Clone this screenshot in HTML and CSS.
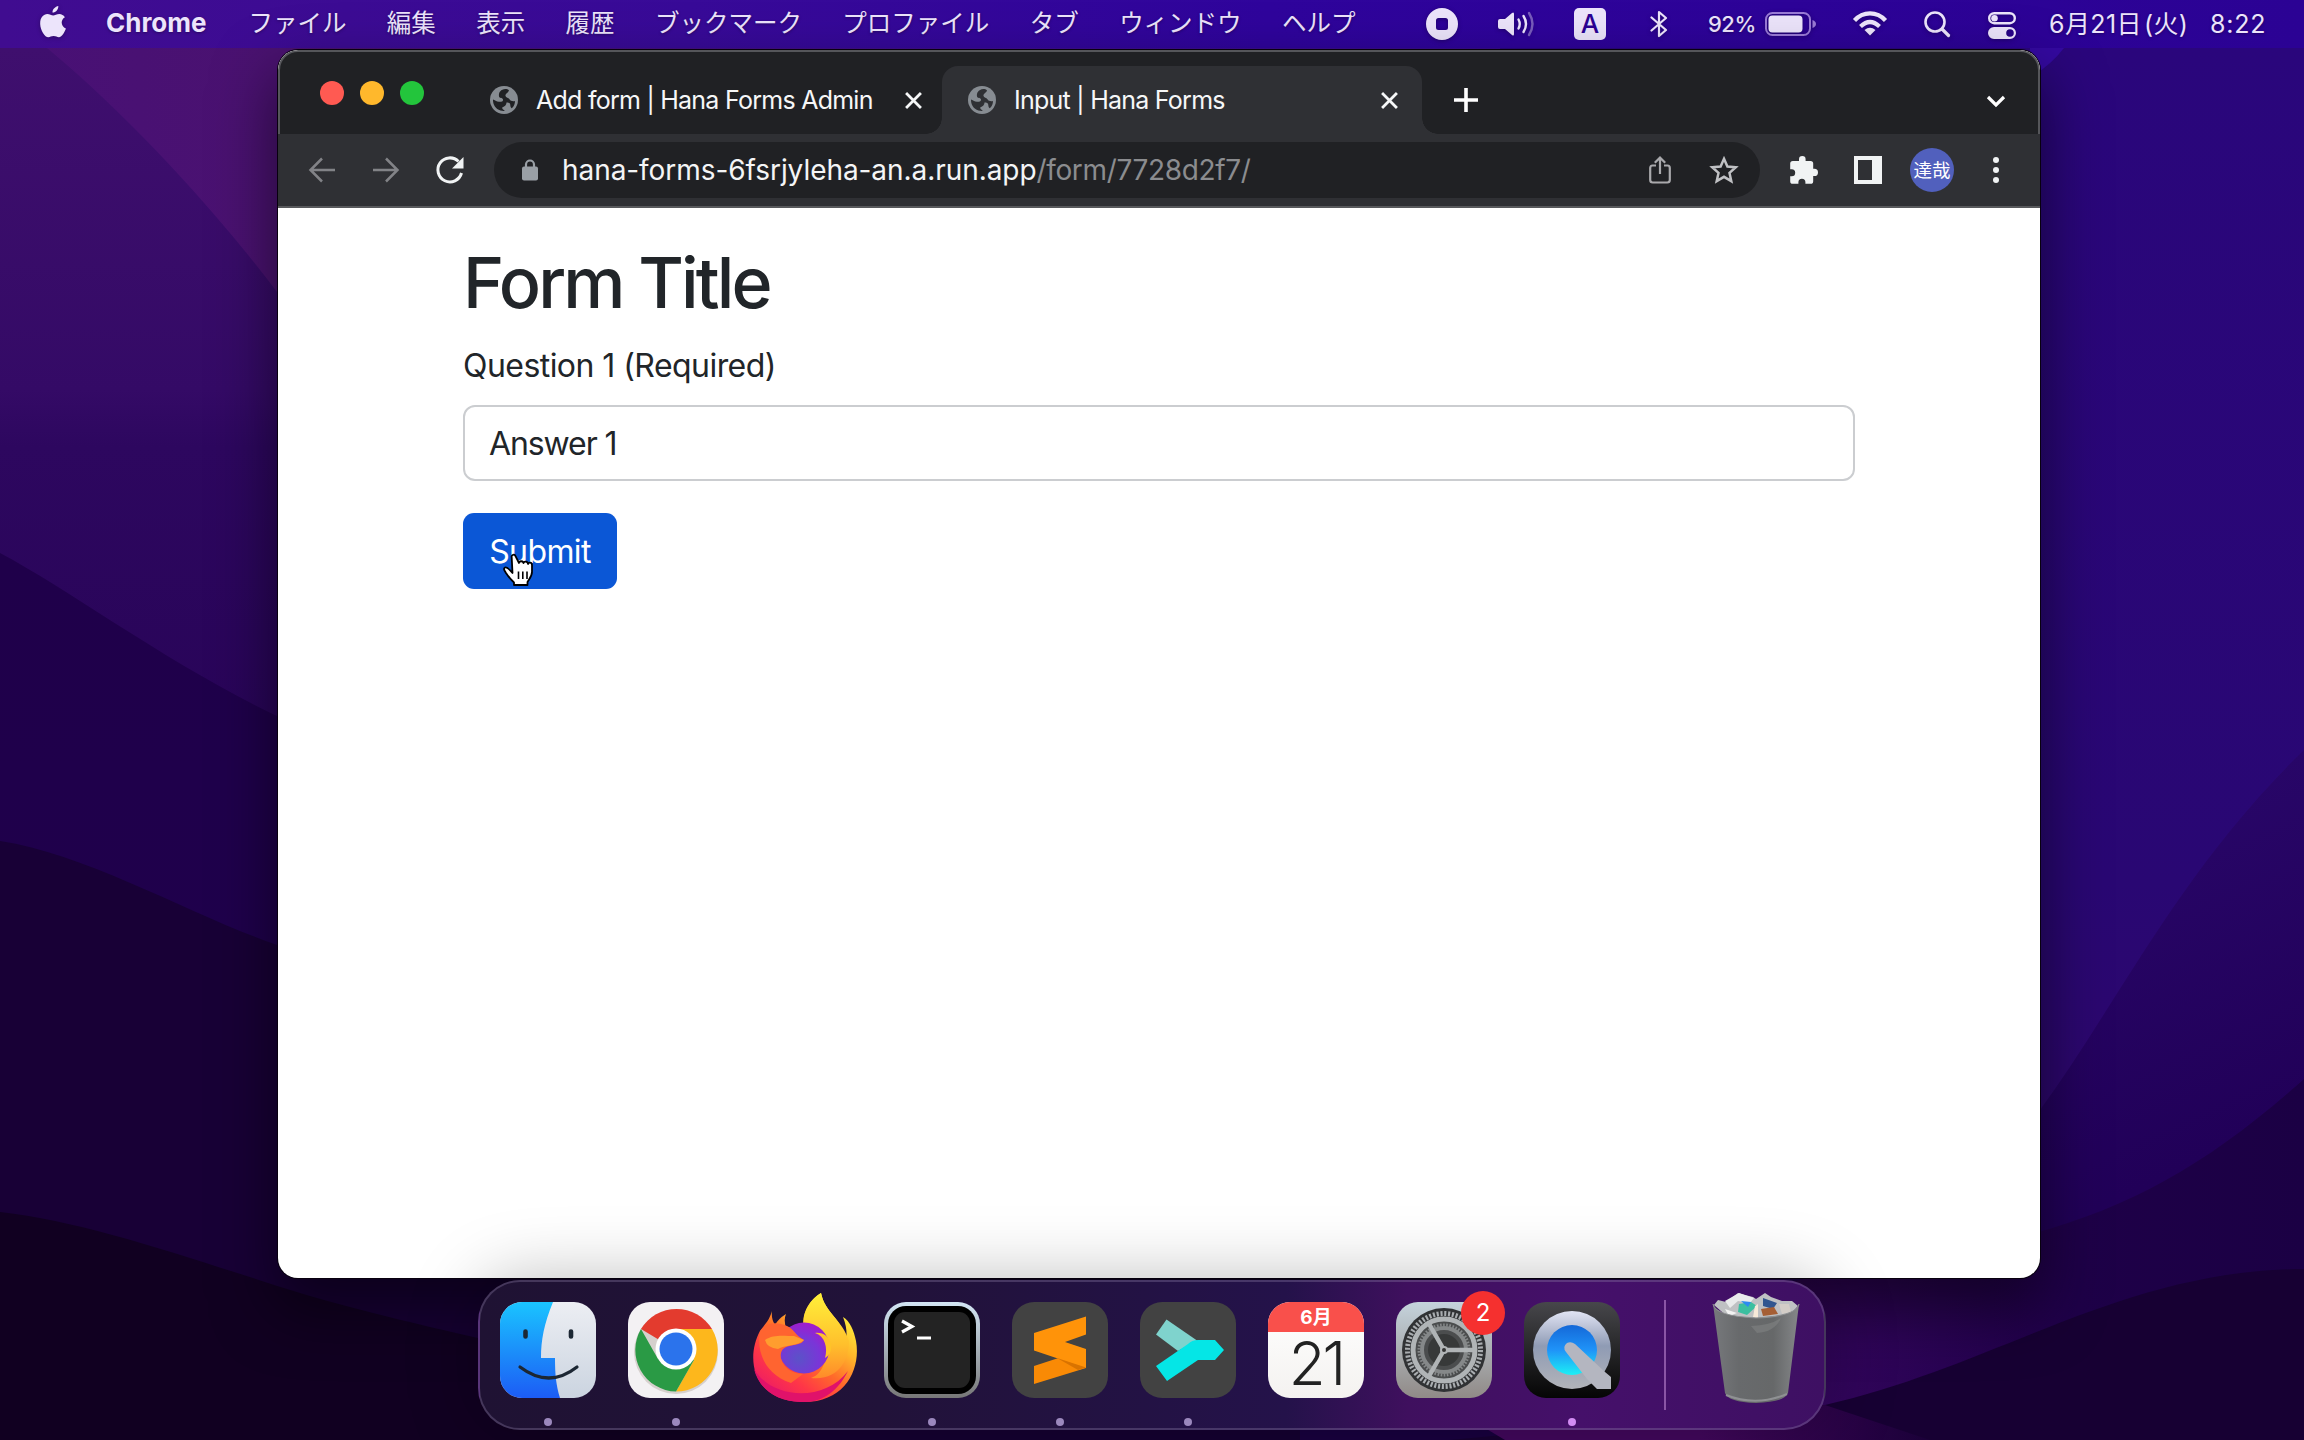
FILE: index.html
```html
<!DOCTYPE html>
<html lang="ja">
<head>
<meta charset="utf-8">
<title>Input | Hana Forms</title>
<link rel="stylesheet" href="styles.css">
</head>
<body>
<svg class="wallpaper" viewBox="0 0 2304 1440" preserveAspectRatio="none" aria-hidden="true">
  <defs>
    <linearGradient id="w0" x1="0" x2="1" y1="0" y2="0"><stop offset="0" stop-color="#481076"/><stop offset=".12" stop-color="#4a1270"/><stop offset=".45" stop-color="#3c0c90"/><stop offset="1" stop-color="#2b0780"/></linearGradient>
    <linearGradient id="w1" x1="0" x2="0" y1="0" y2="1"><stop offset="0" stop-color="#3f0f6e"/><stop offset=".48" stop-color="#340a66"/><stop offset=".56" stop-color="#2d075f"/><stop offset="1" stop-color="#280458"/></linearGradient>
    <linearGradient id="w2" x1="0" x2="0" y1="0" y2="1"><stop offset="0" stop-color="#1f004a"/><stop offset="1" stop-color="#1f004e"/></linearGradient>
    <linearGradient id="w3" x1="0" x2="0" y1="0" y2="1"><stop offset="0" stop-color="#2a067c"/><stop offset=".6" stop-color="#290773"/><stop offset="1" stop-color="#320764"/></linearGradient>
    <linearGradient id="w4" x1="0" x2="1" y1="0" y2="0"><stop offset="0" stop-color="#480a68"/><stop offset=".45" stop-color="#34065e"/><stop offset=".75" stop-color="#1e0048"/><stop offset="1" stop-color="#1b0044"/></linearGradient>
    <linearGradient id="w5" gradientUnits="userSpaceOnUse" x1="1700" x2="1930" y1="0" y2="0"><stop offset="0" stop-color="#43075e"/><stop offset="1" stop-color="#1a0038"/></linearGradient>
    <linearGradient id="w6" gradientUnits="userSpaceOnUse" x1="2060" y1="860" x2="2200" y2="1160"><stop offset="0" stop-color="#280668"/><stop offset="1" stop-color="#210058"/></linearGradient>
  </defs>
  <rect width="2304" height="1440" fill="url(#w0)"/>
  <path d="M0 48H47C110 100 200 190 277 292L460 450V760H0Z" fill="url(#w1)"/>
  <path d="M0 553C70 590 170 665 277 716L500 800V1440H0Z" fill="url(#w2)"/>
  <path d="M0 841C90 855 190 915 277 945L900 1100V1440H0Z" fill="#180036"/>
  <path d="M0 1212C90 1222 200 1262 300 1293S700 1390 1000 1440H0Z" fill="#110021"/>
  <path d="M1500 48H2304V1440H1500Z" fill="url(#w3)"/>
  <path d="M2030 78Q2052 64 2064 48H2030Z" fill="#3409a0"/>
  <path d="M1500 1300L2040 1110C2120 1000 2180 870 2304 750V1440H1500Z" fill="url(#w6)"/>
  <path d="M1400 1360L1900 1260C2080 1235 2180 1190 2304 1079V1440H1400Z" fill="url(#w4)"/>
  <path d="M800 1278H1500V1440H800Z" fill="#150032"/>
  <path d="M1300 1440V1360L1485 1428L1512 1440Z" fill="#190040"/>
  <path d="M1450 1440L1825 1405C2000 1365 2120 1270 2304 1269V1440Z" fill="#170033"/>
  <path d="M1485 1428L1825 1405L1930 1440H1505Z" fill="url(#w5)"/>
</svg>

<header class="menubar">
  <svg class="apple" viewBox="0 0 26 32"><path d="M18.3 0c.3 2.900-2.600 6.800-5.800 6.600C12.200 3.700 15.200.4 18.300 0ZM24.900 11.200c-4.800 2.900-4 9.400 1 11.400-.9 3-3.900 8.700-7 8.700-2 0-2.800-1.200-5.300-1.200s-3.400 1.200-5.200 1.200C4.800 31.300.4 24.100.2 18.200-.1 11.600 3.500 8.200 7.300 8.100c2.300 0 4.200 1.500 5.900 1.500 1.600 0 3.600-1.600 6.200-1.600 2.200.1 4.200 1.200 5.500 3.200Z"/></svg>
  <nav class="menus">
    <b class="app-name">Chrome</b><span>ファイル</span><span>編集</span><span>表示</span><span>履歴</span><span>ブックマーク</span><span>プロファイル</span><span>タブ</span><span>ウィンドウ</span><span>ヘルプ</span>
  </nav>
  <div class="status">
    <svg class="st-rec" width="32" height="32" viewBox="0 0 32 32"><path fill-rule="evenodd" d="M16 0a16 16 0 1 1 0 32a16 16 0 1 1 0-32ZM12.500 10a2.500 2.500 0 0 0-2.500 2.500v7a2.500 2.500 0 0 0 2.500 2.500h7a2.500 2.500 0 0 0 2.500-2.500v-7a2.500 2.500 0 0 0-2.500-2.500Z"/></svg>
    <svg class="st-vol" width="38" height="28" viewBox="0 0 38 28"><path d="M0 11q0-2 2-2h5l7-6q2-1.500 2 1v20q0 2.500-2 1l-7-6H2q-2 0-2-2Z"/><g fill="none" stroke="#ece4fb" stroke-width="2.400" stroke-linecap="round"><path d="M20.500 9.500q2.500 4.500 0 9"/><path d="M25.500 6q5 8 0 16"/><path d="M31 3q7 11 0 22" opacity=".4"/></g></svg>
    <span class="ime">A</span>
    <svg class="st-bt" width="18" height="28" viewBox="0 0 18 28"><path d="M1.500 7.500 16 20 9 26V2L16 8 1.500 20.500" fill="none" stroke="#ece4fb" stroke-width="2.200" stroke-linejoin="round" stroke-linecap="round"/></svg>
    <span class="pct">92%</span>
    <svg class="st-bat" width="52" height="24" viewBox="0 0 52 24"><rect x="1" y="1" width="44" height="22" rx="6.500" fill="none" stroke="#9a7ad6" stroke-width="2"/><rect x="3.500" y="3.500" width="34" height="17" rx="4"/><path d="M47.500 8q3.500 1.500 3.500 4t-3.500 4Z" fill="#9a7ad6"/></svg>
    <svg class="st-wifi" width="34" height="25" viewBox="0 0 34 25"><g fill="none" stroke="#ece4fb" stroke-width="4.200"><path d="M1.500 9.500C10 0 24 0 32.500 9.500"/><path d="M7.500 15.500q9.500-9 19 0"/></g><path d="M11.500 19q5.500-4.500 11 0L17 24.500Z"/></svg>
    <svg class="st-find" width="26" height="26" viewBox="0 0 26 26"><g fill="none" stroke="#ece4fb" stroke-width="2.600" stroke-linecap="round"><circle cx="11" cy="11" r="9.500"/><path d="m18 18 6.500 6.500" stroke-width="3.200"/></g></svg>
    <svg class="st-cc" width="28" height="27" viewBox="0 0 28 27"><rect x="1.200" y="1.200" width="25.600" height="10" rx="5" fill="none" stroke="#ece4fb" stroke-width="2.400"/><circle cx="6.500" cy="6.200" r="3.300"/><path fill-rule="evenodd" d="M6 15h16a6 6 0 0 1 0 12H6a6 6 0 0 1 0-12Zm16 2.200a3.800 3.800 0 1 0 0 7.600a3.800 3.800 0 1 0 0-7.600Z"/></svg>
    <span class="date">6月21日<span class="dow">(火)</span></span><span class="time">8:22</span>
  </div>
</header>

<main class="window">
  <div class="tabstrip">
    <div class="lights"><i class="red"></i><i class="amber"></i><i class="green"></i></div>
    <div class="tab">
      <svg class="globe" viewBox="0 0 28 28"><circle cx="14" cy="14" r="14" fill="#878c92"/><path d="M15.500 3C10 3.500 8.500 7 9 10.500c.3 1.700 3.500 1 4 3 .4 2-2 2.500-4 2.300C6.500 15.500 4.500 14 3 13.500c-.2 5 2.500 9.500 7.500 11 2 .5 3.500.5 4.500.3-1.500-1-3-1.800-2.800-3.300 2.800-1 4.300-3 4.300-5 2 0 3.800.5 3.800 2.500 0 1.500.5 2.800 1.500 3.300 2.200-1.800 3.200-4.500 3.200-7.300-2 .5-4.500.2-5.500-1.700-1-1.700-3.500-1.300-4-3.300C15 7.500 18.500 7 19 4.300 18 3.400 16.800 3 15.500 3Z" fill="#202124"/></svg>
      <span class="tab-title t1">Add form | Hana Forms Admin</span>
      <svg class="close" viewBox="0 0 16 16"><path d="M1 1 15 15M15 1 1 15"/></svg>
    </div>
    <div class="tab active">
      <svg class="globe" viewBox="0 0 28 28"><circle cx="14" cy="14" r="14" fill="#878c92"/><path d="M15.500 3C10 3.500 8.500 7 9 10.500c.3 1.700 3.500 1 4 3 .4 2-2 2.500-4 2.300C6.500 15.500 4.500 14 3 13.500c-.2 5 2.500 9.500 7.500 11 2 .5 3.500.5 4.500.3-1.500-1-3-1.800-2.800-3.300 2.800-1 4.300-3 4.300-5 2 0 3.800.5 3.800 2.500 0 1.500.5 2.800 1.500 3.300 2.200-1.800 3.200-4.500 3.200-7.300-2 .5-4.500.2-5.500-1.700-1-1.700-3.500-1.300-4-3.300C15 7.500 18.500 7 19 4.300 18 3.400 16.800 3 15.500 3Z" fill="#2f3034"/></svg>
      <span class="tab-title t2">Input | Hana Forms</span>
      <svg class="close" viewBox="0 0 16 16"><path d="M1 1 15 15M15 1 1 15"/></svg>
    </div>
    <svg class="plus" viewBox="0 0 24 24"><path d="M12 0v24M0 12h24"/></svg>
    <svg class="chev" viewBox="0 0 20 12"><path d="m2 2 8 8 8-8"/></svg>
  </div>

  <div class="toolbar">
    <svg class="arrow" viewBox="0 0 26 26"><path d="M26 13H2M13 1.500 1.500 13 13 24.500"/></svg>
    <svg class="arrow" viewBox="0 0 26 26"><path d="M0 13h24M13 1.500 24.500 13 13 24.500"/></svg>
    <svg class="reload" viewBox="0 0 28 28"><path d="M22.500 5.500A12 12 0 1 0 25.500 17" fill="none" stroke="#f1f3f4" stroke-width="3"/><path d="M27.500 1v11.500H16Z" fill="#f1f3f4"/></svg>
    <div class="omnibox">
      <svg class="lock" viewBox="0 0 16 22"><path d="M4 9V5.500a4 4 0 0 1 8 0V9" fill="none" stroke="#9aa0a6" stroke-width="2.200"/><rect y="7.500" width="16" height="14" rx="2" fill="#9aa0a6"/></svg>
      <span class="url">hana-forms-6fsrjyleha-an.a.run.app<span class="path">/form/7728d2f7/</span></span>
      <svg class="share" viewBox="0 0 22 28"><g fill="none" stroke="#a9a9ac" stroke-width="2.200"><path d="M7 9.500H3.500Q1.200 9.500 1.200 12v12q0 2.500 2.500 2.500h14.600q2.500 0 2.500-2.500V12q0-2.500-2.300-2.500H15"/><path d="M11 18V2M5.800 6.800 11 1.600l5.200 5.200"/></g></svg>
      <svg class="star" viewBox="0 0 28 28"><path d="m14 2.800 3.400 7.700 8.400.8-6.300 5.600 1.800 8.200-7.300-4.300-7.300 4.300 1.800-8.200-6.300-5.600 8.400-.8Z" fill="none" stroke="#c0c1c4" stroke-width="2.500"/></svg>
    </div>
    <svg class="ext" viewBox="0 0 28 28"><path d="M9 3.300a3.300 3.300 0 0 1 6.600 0V5h5q2.600 0 2.600 2.600v5.200h1.200a3.600 3.600 0 0 1 0 7.200h-1.200v5.200q0 2.600-2.600 2.600h-5.200v-1.500a3.500 3.500 0 0 0-7 0v1.500H2.800Q.2 27.800.2 25.200v-5h1.500a3.500 3.500 0 0 0 0-7H.2V7.600Q.2 5 2.800 5H9Z"/></svg>
    <svg class="panel" viewBox="0 0 28 28"><path fill-rule="evenodd" d="M0 0h28v28H0ZM4 4v20h14V4Z"/></svg>
    <span class="avatar">達哉</span>
    <svg class="kebab" viewBox="0 0 6 26"><circle cx="3" cy="3" r="3"/><circle cx="3" cy="13" r="3"/><circle cx="3" cy="23" r="3"/></svg>
  </div>

  <section class="page">
    <h1>Form Title</h1>
    <label for="q1">Question 1 (Required)</label>
    <input id="q1" type="text" value="Answer 1">
    <button type="button"><span>Submit</span>
      <svg class="cursor" viewBox="0 0 32 34"><path d="M9.500 20C7 17 4 14 2 14.500c-2 1-.5 3 1 5.500 3 4.500 4 6 8 9.500v2.500h13.500v-3c2.500-4 4.500-6 4.500-10V12c0-3-3.500-3-4-1-.2-3-4.200-3.200-4.500-.8-.5-2.700-4.300-2.500-4.500-.2L12.500 3.200C11.700.7 8 1.500 8.700 4.500Z" fill="#fff" stroke="#000" stroke-width="1.800" stroke-linejoin="round"/><path d="M15.500 18.500V26M19.800 18.500V26M24 18.500V26" stroke="#000" stroke-width="1.600"/></svg>
    </button>
  </section>
</main>

<footer class="dock">
  <div class="slot run"><svg viewBox="0 0 96 96">
    <defs><linearGradient id="fa" x2="0" y2="1"><stop stop-color="#1ac4ff"/><stop offset="1" stop-color="#1c5cf5"/></linearGradient><linearGradient id="fb" x2="0" y2="1"><stop stop-color="#eceef3"/><stop offset="1" stop-color="#cbd4e0"/></linearGradient><clipPath id="sq"><rect width="96" height="96" rx="22"/></clipPath></defs>
    <g clip-path="url(#sq)"><path d="M0 0h96v96H0Z" fill="url(#fb)"/><path d="M0 0h53C44 22 41 38 41 56h14c0 16 1 27 5 40H0Z" fill="url(#fa)"/></g>
    <g stroke="#1c2733" stroke-linecap="round" fill="none"><path d="M25.500 29.500v5M71 29.500v5" stroke-width="4.600"/><path d="M20 65q29 22 57 0" stroke-width="3.200"/></g></svg></div>
  <div class="slot run"><svg viewBox="0 0 96 96">
    <rect width="96" height="96" rx="22" fill="#f3f1f3"/><circle cx="48" cy="50" r="42" fill="#b9b0a8" opacity=".5"/>
    <path d="M48 48 13 27A41.500 41.500 0 0 1 84 27Z" fill="#e33b2e"/><path d="M48 48V27H84A41.500 41.500 0 0 1 48 89.500L66 58Z" fill="#fdb71c"/><path d="M48 48 66 58 48 89.500A41.500 41.500 0 0 1 13 27L30 57Z" fill="#2a9a45"/>
    <circle cx="48" cy="47" r="20.500" fill="#fff"/><circle cx="48" cy="47" r="16.500" fill="#2b73ec"/></svg></div>
  <div class="slot"><svg class="fox" viewBox="0 0 106 110">
    <defs><linearGradient id="ff1" x1=".8" y1=".1" x2=".2" y2=".9"><stop stop-color="#fff33c"/><stop offset=".3" stop-color="#ffb52a"/><stop offset=".55" stop-color="#ff6a2a"/><stop offset=".8" stop-color="#ff3647"/><stop offset="1" stop-color="#f02060"/></linearGradient><radialGradient id="ff2" cx=".4" cy=".7" r=".7"><stop stop-color="#5b52c8"/><stop offset=".6" stop-color="#7a35d8"/><stop offset="1" stop-color="#a01ccc"/></radialGradient><linearGradient id="ff3" x2="0" y2="1"><stop stop-color="#fff03a"/><stop offset=".6" stop-color="#ffc02c"/><stop offset="1" stop-color="#ff8a2a"/></linearGradient></defs>
    <path d="M21 18C18 28 14 31 9 38-6 66 2 109 53 109 95 109 110 75 105 48 103 38 99 28 92 24 96 34 96 42 95 46 91 26 74 20 70 0 57 8 51 22 53 33L36 38Q32 28 35 21 27 26 24 32 20 26 21 18Z" fill="url(#ff1)"/>
    <path d="M70 0C57 8 50 22 53 36 66 40 77 52 74 68 71 78 66 83 60 85 88 88 98 66 98 48 91 26 74 20 70 0Z" fill="url(#ff3)"/>
    <circle cx="53" cy="55" r="25.500" fill="url(#ff2)"/>
    <path d="M9 38C16 30 24 28 36 33 43 36 44 42 53 47 49 55 33 49 30 60 28 70 38 81 52 81L40 90C15 82 5 60 9 38Z" fill="#ff6430"/>
    <path d="M14 47C22 41 34 43 43 43L53 47C47 53 33 52 27 56Q16 55 14 47Z" fill="#ff9d2e"/>
    <path d="M64 40C74 43 77 55 74 65 86 59 80 38 64 40Z" fill="#ffc229"/>
    <path d="M3 76C20 106 73 110 97 78 84 104 65 110 49 109 25 108 8 96 3 76Z" fill="#e0126a"/></svg></div>
  <div class="slot run"><svg viewBox="0 0 96 96"><defs><linearGradient id="ta" x2="0" y2="1"><stop stop-color="#d3e6f5"/><stop offset="1" stop-color="#777"/></linearGradient></defs><rect width="96" height="96" rx="22" fill="url(#ta)"/><rect x="4" y="4" width="88" height="88" rx="18" fill="#000"/><rect x="10" y="10" width="76" height="76" rx="11" fill="#232323"/><path d="m18 19 10 5.500L18 30M33 36h14" fill="none" stroke="#fff" stroke-width="3.200"/></svg></div>
  <div class="slot run"><svg viewBox="0 0 96 96"><rect width="96" height="96" rx="22" fill="#424242"/><path d="m22 64 52-17v19L22 82Z" fill="#f98a05"/><path d="M22 31 74 14.500v18L53 40l21 7v19L22 48.500Z" fill="#ff9309"/><path d="m45 56 29 9.500-8 2.500Z" fill="#d97300"/></svg></div>
  <div class="slot run"><svg viewBox="0 0 96 96"><rect width="96" height="96" rx="22" fill="#424242"/><path d="M26.500 17.500 57 38.500 38 49 16 32.500Z" fill="#7fd3cd"/><path d="M16 64 48 42q4-4 10-4h17l9 10-9 10H58L27 79Z" fill="#05e6e6"/></svg></div>
  <div class="slot"><div class="cal"><span class="month">6月</span><span class="day">21</span></div></div>
  <div class="slot"><svg viewBox="0 0 96 96">
    <defs><linearGradient id="ga" x2="0" y2="1"><stop stop-color="#c5d3dc"/><stop offset="1" stop-color="#908a87"/></linearGradient></defs>
    <rect width="96" height="96" rx="22" fill="url(#ga)"/><circle cx="48" cy="48" r="42" fill="#303234"/><circle cx="48" cy="48" r="36.500" fill="none" stroke="#a9adb0" stroke-width="5" stroke-dasharray="2.100 1.722"/><circle cx="48" cy="48" r="31" fill="#4b4d4e" stroke="#b0b4b6" stroke-width="5"/>
    <circle cx="48" cy="48" r="22" fill="none" stroke="#858889" stroke-width="4"/><circle cx="48" cy="48" r="25" fill="none" stroke="#858889" stroke-width="3" stroke-dasharray="1.600 1.540"/><circle cx="48" cy="48" r="16" fill="#373939"/><path d="M48 48h31M48 48 32.500 21M48 48 32.500 75" stroke="#b0b4b6" stroke-width="4.500"/><circle cx="48" cy="48" r="4" fill="#b0b4b6"/><circle cx="48" cy="48" r="2" fill="#333"/></svg><span class="badge">2</span></div>
  <div class="slot run bright"><svg viewBox="0 0 96 96">
    <defs><linearGradient id="qa" x2="0" y2="1"><stop stop-color="#47474b"/><stop offset="1" stop-color="#050505"/></linearGradient><linearGradient id="qb" x2="0" y2="1"><stop stop-color="#e1e4f4"/><stop offset=".45" stop-color="#8f9bb4"/><stop offset="1" stop-color="#b2b4b9"/></linearGradient><linearGradient id="qc" x2="0" y2="1"><stop stop-color="#1468d8"/><stop offset=".5" stop-color="#1f93f8"/><stop offset="1" stop-color="#1cf0f5"/></linearGradient></defs>
    <rect width="96" height="96" rx="22" fill="url(#qa)"/><circle cx="48" cy="48" r="39" fill="url(#qb)"/><circle cx="48" cy="48" r="25" fill="url(#qc)"/><path d="M42 50q-4-5 1-9 4-2 8 1L81 70l6 5v12H73L63 77Z" fill="#b4b6c0"/></svg></div>
  <i class="divider"></i>
  <div class="slot trash"><svg viewBox="0 0 86 112">
    <defs><linearGradient id="tr" x2="1" y2="0"><stop stop-color="#77797c"/><stop offset=".3" stop-color="#686a6c"/><stop offset=".7" stop-color="#666869"/><stop offset="1" stop-color="#858789"/></linearGradient></defs>
    <path d="M1 13 5 8 13 10 25 1 32 3 40 5 43 7 52 1 58 5 69 9 79 9 85 14 74 26 16 26Z" fill="#bfc1c3"/>
    <path d="m12 9 14-8 15 5-4 5-12-2-8 7Z" fill="#e9ebeb"/><path d="m26 12 12-2 6 4-10 9-9-3Z" fill="#3cbfa0"/><path d="m28 9 10 1-3 5Z" fill="#2d8bef"/><path d="m50 6 14 5-4 6-10-3Z" fill="#31568f"/><path d="m48 17 13-2 4 7-15 2Z" fill="#a55f35"/><path d="m66 12 10 0 2 8-9 2Z" fill="#d3cdc7"/><path d="m12 17 12 4-8 3Z" fill="#f2f2f2"/><path d="m42 14 3-2v14l-5-1Z" fill="#f7e9d8"/>
    <path d="M0 12Q2 24 43 26 84 24 86 12L75 101Q72 110 43 111 15 110 12 101Z" fill="url(#tr)"/><path d="M0 12Q2 24 43 26 84 24 86 12" fill="none" stroke="#8c8e90" stroke-width="1.200"/><path d="M13 103Q43 115 74 102" fill="none" stroke="#8f9193" stroke-width="2"/><path d="M38 34q20-1 30-8-6 14-24 15Z" fill="#858788" opacity=".5"/></svg></div>
</footer>
</body>
</html>
```
FILE: styles.css
```css
* { box-sizing: border-box; }
html, body { margin: 0; width: 2304px; height: 1440px; overflow: hidden; }
body { position: relative; background: #1b0044; font-family: Inter, "Noto Sans CJK JP", sans-serif; }
svg { display: block; flex: none; overflow: visible; }
.wallpaper { position: absolute; inset: 0; width: 2304px; height: 1440px; z-index: -1; }

/* Menu bar */
.menubar { display: flex; align-items: center; height: 48px; padding: 0 38px 0 40px; color: #ece4fb;
  background: linear-gradient(90deg, #400c90 0, #380a98 30%, #2f049c 55%, #2b0294 100%);
  font-size: 24.5px; line-height: 48px; white-space: nowrap; text-shadow: 0 1px 3px rgba(0,0,0,.35); }
.menubar svg { fill: #ece4fb; filter: drop-shadow(0 1px 2px rgba(0,0,0,.3)); }
.apple { width: 26px; height: 32px; margin-top: -4px; }
.menus { display: flex; gap: 40.4px; margin-left: 40px; font-family: "Noto Sans CJK JP", sans-serif; font-weight: 400; }
.menus span { position: relative; top: -2px; }
.app-name { width: 102px; font: 700 26px/46px Inter, sans-serif; letter-spacing: 0; }
.status { display: flex; align-items: center; margin-left: auto; }
.st-vol { margin-left: 40px; }
.ime { width: 32px; height: 32px; margin-left: 38px; border-radius: 5px; background: #ece4fb; color: #2b0294; font-size: 26px; font-weight: 500; line-height: 32px; text-align: center; text-shadow: none; }
.st-bt { margin-left: 44px; }
.pct { width: 48px; margin-left: 40px; font-size: 22px; font-weight: 500; letter-spacing: -.5px; }
.st-bat { margin-left: 9px; }
.st-wifi { margin-left: 36px; margin-top: -2px; }
.st-find { margin-left: 37px; }
.st-cc { margin-left: 38px; margin-top: 2px; }
.date { width: 146px; margin-left: 33px; font-size: 25px; font-weight: 400; line-height: 44px; letter-spacing: .4px; }
.dow { margin-left: 2px; }
.time { width: 56px; margin-left: 15px; font-size: 25px; font-weight: 400; line-height: 44px; letter-spacing: .8px; }

/* Browser window */
.window { position: absolute; left: 278px; top: 50px; width: 1762px; height: 1228px; border-radius: 20px; overflow: hidden; background: #fff; }
.window { box-shadow: 0 0 0 1px #08000f, 0 28px 60px 4px rgba(0,0,0,.5); }
.tabstrip { display: flex; height: 84px; background: #202124; border: 2px solid #55565a; border-bottom: 0; border-radius: 20px 20px 0 0; color: #f6f7f8; }
.lights { display: flex; gap: 16px; margin: 29px 0 0 40px; height: 24px; }
.lights i { width: 24px; height: 24px; border-radius: 50%; }
.red { background: #ff5a52; } .amber { background: #ffb82c; } .green { background: #23c53c; }
.tab { display: flex; align-items: center; height: 68px; width: 480px; margin-top: 14px; padding: 0 24px 0 26px; font-size: 25px; position: relative; }
.lights + .tab { width: 478px; margin-left: 40px; padding-right: 20px; }
.active { background: #2f3034; border-radius: 16px 16px 0 0; }
.active::before, .active::after { content: ""; position: absolute; bottom: 0; width: 16px; height: 16px; }
.active::before { right: 100%; background: radial-gradient(circle at 0 0, transparent 15.5px, #2f3034 16px); }
.active::after { left: 100%; background: radial-gradient(circle at 100% 0, transparent 15.5px, #2f3034 16px); }
.globe { width: 28px; height: 28px; }
.tab-title { margin-left: 18px; white-space: nowrap; letter-spacing: -.75px; }
.close { width: 17px; height: 17px; margin-left: auto; fill: none; stroke: #f6f7f8; stroke-width: 2.6; }
.plus { width: 24px; height: 24px; margin: 36px 0 0 32px; stroke: #fff; stroke-width: 3.6; fill: none; }
.chev { width: 20px; height: 12px; margin: 43px 32px 0 auto; stroke: #fff; stroke-width: 3.2; fill: none; }
.toolbar { display: flex; align-items: center; height: 74px; padding: 0 41px 0 31px; background: #2f3034; border: solid #58595c; border-width: 0 0 2px; }
.arrow { width: 26px; height: 26px; margin-right: 38px; fill: none; stroke: #828387; stroke-width: 2.5; }
.reload { width: 28px; height: 28px; margin-right: 30px; margin-left: -1px; }
.omnibox { display: flex; align-items: center; width: 1266px; height: 56px; padding: 0 22px 0 28px; border-radius: 28px; background: #202124; }
.lock { width: 16px; height: 22px; }
.url { margin-left: 24px; font-size: 28px; letter-spacing: -.06px; color: #f4f5f6; white-space: nowrap; }
.path { color: #8b8c8f; letter-spacing: -.35px; }
.share { width: 22px; height: 28px; margin-left: auto; }
.star { width: 28px; height: 28px; margin-left: 39px; }
.ext { width: 28px; height: 28px; margin-left: 30px; fill: #f1f3f4; }
.panel { width: 28px; height: 28px; margin-left: 36px; fill: #f1f3f4; }
.avatar { width: 44px; height: 44px; margin-left: 28px; border-radius: 50%; background: #5160bd; color: #fff; font: 18.500px/42px "Noto Sans CJK JP", sans-serif; text-align: center; }
.kebab { width: 6px; height: 26px; margin-left: 39px; fill: #f1f3f4; }

/* Form */
.page { display: flex; flex-direction: column; align-items: flex-start; height: 1070px; padding: 32px 185px 0; color: #212529; }
.page h1 { margin: 0; font-size: 70px; line-height: 86px; font-weight: 500; letter-spacing: -2.900px; }
.page label { margin-top: 15px; font-size: 32px; line-height: 50px; letter-spacing: -.55px; }
.page input { width: 1392px; height: 76px; margin-top: 14px; padding: 0 24px; border: 2px solid #cbcdd0; border-radius: 12px; font: 32px Inter, sans-serif; letter-spacing: -1.1px; color: #212529; background: #fff; }
.page button { position: relative; width: 154px; height: 76px; margin-top: 32px; padding: 0; border: 0; border-radius: 11px; background: #0b57d6; color: #fff; font: 32px/78px Inter, sans-serif; letter-spacing: -.6px; }
.cursor { position: absolute; left: 40px; top: 40px; width: 32px; height: 34px; }

/* Dock */
.dock { position: absolute; left: 478px; top: 1280px; width: 1348px; height: 150px; display: flex; padding: 20px 0 0 20px; border: 2px solid rgba(140,125,165,.35); border-radius: 42px;
  background: linear-gradient(90deg, #1f1233 0, #211239 30%, #24124a 60%, #3f105e 69%, #45106a 82%, #3e1063 100%);
  box-shadow: 0 0 70px rgba(0,0,0,.27); }
.slot { flex: none; position: relative; width: 96px; height: 96px; margin-right: 32px; }
.slot > svg { width: 96px; height: 96px; }
.slot > .fox { width: 106px; height: 110px; margin: -9px 0 0 -5px; }
.run::after { content: ""; position: absolute; left: 44px; top: 116px; width: 8px; height: 8px; border-radius: 50%; background: #9b88bd; }
.bright::after { background: #d28cf3; }
.cal { display: flex; flex-direction: column; height: 96px; border-radius: 22px; background: linear-gradient(#fff, #f4f2f0); text-align: center; }
.month { height: 30px; border-radius: 22px 22px 0 0; background: #f9504b; color: #fff; font: 700 19px/31px Inter, "Noto Sans CJK JP", sans-serif; }
.day { font-size: 60px; font-weight: 300; line-height: 62px; color: #222; letter-spacing: -3px; }
.badge { position: absolute; left: 65px; top: -11px; width: 44px; height: 44px; border-radius: 50%; background: #f5302f; color: #fff; font-size: 24px; line-height: 44px; text-align: center; }
.divider { flex: none; width: 2px; height: 110px; margin: -2px 47px 0 12px; background: #8a55a5; }
.slot.trash { margin-right: 0; }
.slot.trash > svg { width: 86px; height: 112px; margin-top: -10px; }
```
